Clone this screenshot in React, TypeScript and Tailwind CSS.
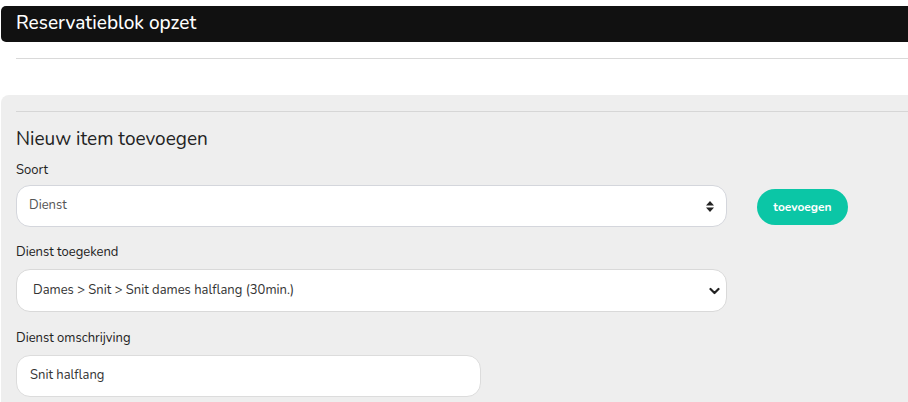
import React from "react";

const font = { fontFamily: '"Nunito", "Lato", "Open Sans", sans-serif' };

function UpDown() {
  return (
    <svg width="8" height="11" viewBox="0 0 8 11" className="fill-[#222]">
      <path d="M4 0 L8 4.5 H0 Z" />
      <path d="M4 11 L8 6.5 H0 Z" />
    </svg>
  );
}

function Chevron() {
  return (
    <svg width="11" height="8" viewBox="0 0 11 8" fill="none" stroke="#222" strokeWidth="2.2" strokeLinecap="round" strokeLinejoin="round">
      <path d="M1.5 2 L5.5 6 L9.5 2" />
    </svg>
  );
}

export default function App() {
  return (
    <div className="w-[908px] h-[402px] overflow-hidden bg-white text-[#222]" style={font}>
      <div className="pt-[6px] pl-[1px]">
        <div className="h-[36px] bg-[#111111] rounded-l-[5px] flex items-center pl-[15px]">
          <h1 className="text-white text-[19px] leading-none font-medium pb-[2px]">Reservatieblok opzet</h1>
        </div>
      </div>
      <div className="ml-[16px] mt-[16px] border-t border-[#d9d9d9]" />
      <div className="mt-[36px] ml-[1px] bg-[#eeeeee] rounded-tl-[8px] pt-[16px] h-[320px]">
        <div className="ml-[15px] border-t border-[#d6d6d6]" />
        <div className="pl-[15px]">
          <h2 className="text-[19px] leading-none mt-[18px] text-[#222]">Nieuw item toevoegen</h2>
          <div className="text-[13px] leading-none mt-[15px] text-[#222]">Soort</div>
          <div className="flex items-center mt-[8px]">
            <div className="w-[711px] h-[42px] bg-white border border-[#d4d6dc] rounded-[14px] flex items-center justify-between pl-[12px] pr-[12px]">
              <span className="text-[13px] text-[#555]">Dienst</span>
              <UpDown />
            </div>
            <button className="ml-[30px] mt-[1px] w-[91px] h-[36px] rounded-full bg-[#0bc6a6] text-white text-[12px] font-bold">toevoegen</button>
          </div>
          <div className="text-[13px] leading-none mt-[19px] text-[#222]">Dienst toegekend</div>
          <div className="w-[711px] h-[43px] mt-[10px] bg-white border border-[#d9d9d9] rounded-[14px] flex items-center justify-between pl-[16px] pr-[6px]">
            <span className="text-[13px] text-[#333]">Dames &gt; Snit &gt; Snit dames halflang (30min.)</span>
            <Chevron />
          </div>
          <div className="text-[13px] leading-none mt-[20px] text-[#222]">Dienst omschrijving</div>
          <div className="w-[465px] h-[42px] mt-[10px] bg-white border border-[#dcdcdc] rounded-[14px] flex items-center pl-[13px]">
            <span className="text-[13px] text-[#333]">Snit halflang</span>
          </div>
        </div>
      </div>
    </div>
  );
}
